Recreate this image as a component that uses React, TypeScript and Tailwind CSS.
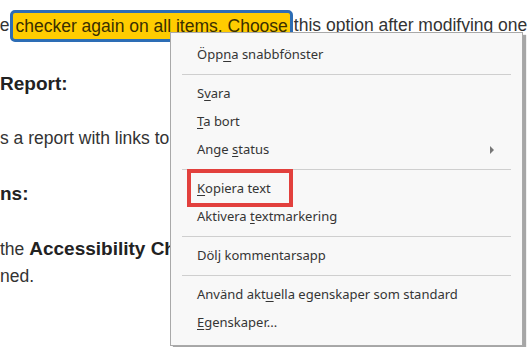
type MenuEntry =
  | { kind: 'sep' }
  | { kind: 'item'; before: string; key?: string; after?: string; submenu?: boolean; boxed?: boolean };

const entries: MenuEntry[] = [
  { kind: 'item', before: 'Öpp', key: 'n', after: 'a snabbfönster' },
  { kind: 'sep' },
  { kind: 'item', before: 'S', key: 'v', after: 'ara' },
  { kind: 'item', before: '', key: 'T', after: 'a bort' },
  { kind: 'item', before: 'Ange ', key: 's', after: 'tatus', submenu: true },
  { kind: 'sep' },
  { kind: 'item', before: '', key: 'K', after: 'opiera text', boxed: true },
  { kind: 'item', before: 'Aktivera ', key: 't', after: 'extmarkering' },
  { kind: 'sep' },
  { kind: 'item', before: 'Dölj kommentarsapp' },
  { kind: 'sep' },
  { kind: 'item', before: 'Använd akt', key: 'u', after: 'ella egenskaper som standard' },
  { kind: 'item', before: '', key: 'E', after: 'genskaper...' },
];

function ContextMenu() {
  return (
    <div className="absolute left-[170px] top-[32px] w-[353px] border border-[#a9a9a9] bg-[#f8f8f8] py-[8px] shadow-[3px_3px_1px_rgba(0,0,0,0.35)] font-['Noto_Sans',sans-serif] text-[13px] text-[#353535]">
      {entries.map((entry, i) =>
        entry.kind === 'sep' ? (
          <div key={i} className="flex h-[11px] items-center px-[11px]">
            <div className="h-px w-full bg-[#cfcfcf]" />
          </div>
        ) : (
          <div key={i} className="relative flex h-[28px] items-center pl-[26px] pr-[30px]">
            {entry.boxed ? (
              <div className="absolute left-[16px] top-[-6px] h-[38px] w-[106px] border-[4px] border-[#e2403d]" />
            ) : null}
            <span className="whitespace-pre">
              {entry.before}
              {entry.key ? <span className="underline underline-offset-2">{entry.key}</span> : null}
              {entry.after}
            </span>
            {entry.submenu ? (
              <span className="ml-auto mr-[-2px] h-0 w-0 border-y-[4px] border-l-[4px] border-y-transparent border-l-[#777]" />
            ) : null}
          </div>
        ),
      )}
    </div>
  );
}

export default function App() {
  return (
    <div className="relative h-[347px] w-[531px] overflow-hidden bg-white font-['Liberation_Sans',Arial,sans-serif] text-[17.5px] leading-[27.5px] text-[#333]">
      <div className="whitespace-nowrap pt-[10px]">
        <p className="ml-[-10px]">
          he
          <span className="mx-[1px] inline-block rounded-[5px] border-[3px] border-[#2d6db5] bg-[#ffcc00] px-[2px] align-middle leading-[26px] text-[#3a2f00]">
            checker again on all items. Choose
          </span>
          this option after modifying one or more items.
        </p>
        <p className="mt-[27.5px] text-[19px] font-bold text-[#222]">Report:</p>
        <p className="mt-[27.5px]">s a report with links to the items that failed the check.</p>
        <p className="mt-[27.5px] text-[19px] font-bold text-[#222]">ns:</p>
        <p className="mt-[27.5px]">
          the <span className="text-[19px] font-bold text-[#222]">Accessibility Checker</span> panel, choose Recheck
        </p>
        <p>ned.</p>
      </div>
      <ContextMenu />
    </div>
  );
}
